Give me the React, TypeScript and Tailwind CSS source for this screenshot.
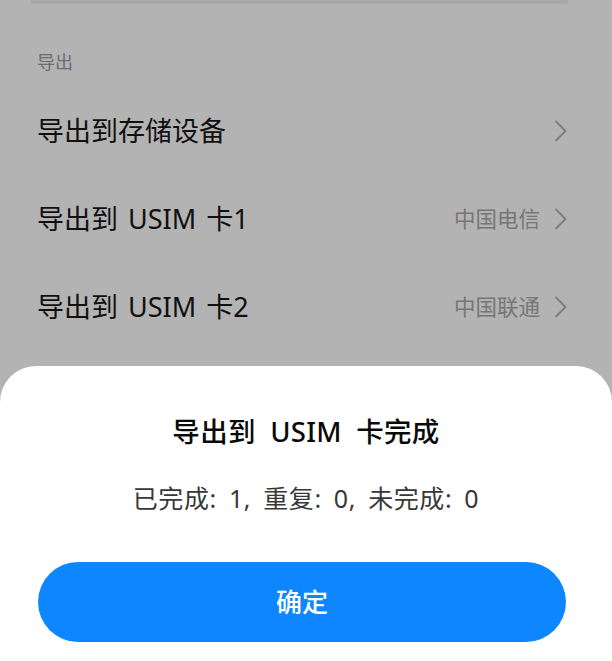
import React from 'react';

const font = { fontFamily: '"Noto Sans", "Noto Sans CJK SC", sans-serif' };

function Chevron() {
  return (
    <svg width="14" height="22" viewBox="0 0 14 22" fill="none" className="shrink-0">
      <path d="M2 1.5 L11.5 11 L2 20.5" stroke="#7b7b7b" strokeWidth="1.8" strokeLinecap="round" strokeLinejoin="round" />
    </svg>
  );
}

const rows: { label: string; carrier?: string }[] = [
  { label: '导出到存储设备' },
  { label: '导出到 USIM 卡1', carrier: '中国电信' },
  { label: '导出到 USIM 卡2', carrier: '中国联通' },
];

export default function App() {
  return (
    <div className="h-[661px] w-[612px] overflow-hidden bg-[#b3b3b3] flex flex-col" style={font}>
      {/* dimmed settings page */}
      <div className="h-[366px] shrink-0 flex flex-col">
        <div className="ml-[31px] w-[537px] h-[2px] bg-[#a9a9a9] shadow-[0_1px_2px_rgba(0,0,0,0.12)]" />
        <div className="pl-[37px] pt-[47px] text-[18px] leading-[26px] text-[#6a6c76]">导出</div>
        <div className="mt-[12px] flex flex-col">
          {rows.map(r => (
            <div key={r.label} className="h-[88px] flex items-center justify-between pl-[37px] pr-[44px]">
              <span className="text-[27px] leading-[36px] text-[#101010] [word-spacing:3px]">{r.label}</span>
              <div className="flex items-center gap-[14px]">
                {r.carrier && <span className="text-[21.5px] text-[#767676]">{r.carrier}</span>}
                <Chevron />
              </div>
            </div>
          ))}
        </div>
      </div>

      {/* bottom sheet */}
      <div className="flex-1 bg-white rounded-t-[36px] flex flex-col pt-[47px]">
        <div className="self-center text-[27.5px] leading-[38px] font-medium text-[#0a0a0a] [word-spacing:7px] tracking-[0.3px]">导出到 USIM 卡完成</div>
        <div className="self-center mt-[30px] text-[25px] leading-[34px] text-[#383838] tracking-[0.6px] [word-spacing:5px]">已完成: 1, 重复: 0, 未完成: 0</div>
        <button className="mt-[47px] ml-[38px] w-[528px] h-[80px] rounded-full bg-[#0d86ff] text-white text-[26px] font-medium flex items-center justify-center">
          确定
        </button>
      </div>
    </div>
  );
}
